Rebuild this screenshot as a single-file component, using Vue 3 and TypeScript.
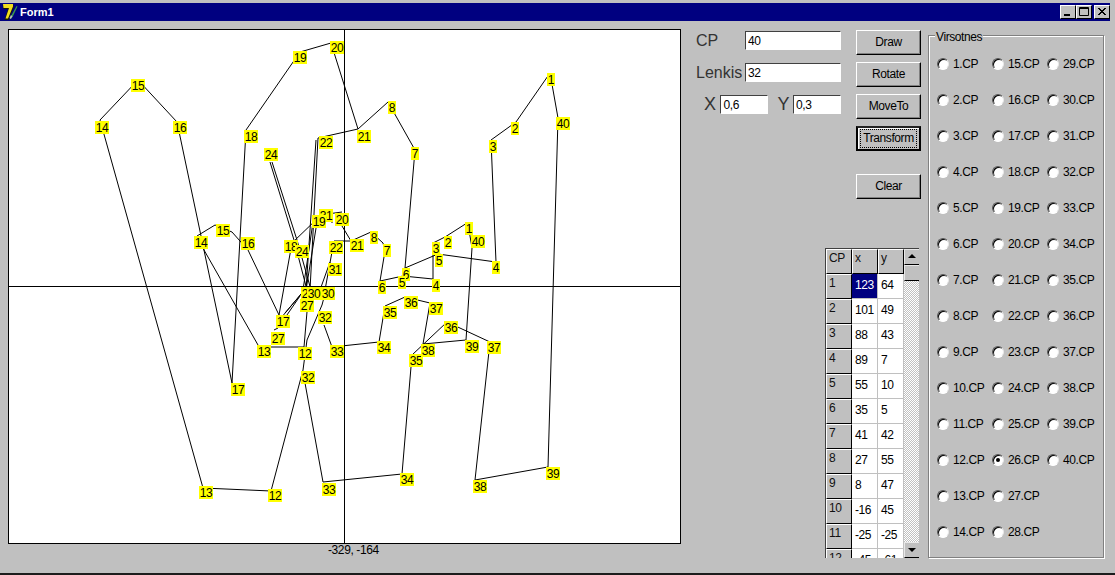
<script setup lang="ts">
type Pt = [number, number];

const canvasLines: Pt[][] = [
  // outer outline
  [[550, 73], [516, 122], [491, 140], [496, 262], [438, 254], [405, 268], [415, 150], [388, 102], [358, 129], [331, 43], [300, 52], [246, 130], [232, 383], [177, 122], [138, 80], [100, 120], [203, 488], [271, 491], [303, 370], [307, 340], [322, 305], [326, 290]],
  [[303, 372], [323, 482], [402, 474], [412, 355], [447, 322], [490, 342], [475, 480], [548, 467], [558, 118], [550, 73]],
  [[358, 129], [318, 138], [310, 290]],
  [[316, 140], [306, 290]],
  [[270, 162], [294, 240], [307, 290]],
  [[272, 162], [297, 240], [311, 290]],
  // inner outline
  [[467, 223], [445, 237], [433, 243], [433, 279], [403, 276], [380, 281], [385, 251], [383, 243], [371, 232], [351, 241], [334, 241], [325, 290]],
  [[351, 241], [342, 226]],
  [[342, 212], [320, 215], [319, 217], [292, 243], [279, 315], [248, 250], [232, 232], [215, 225], [197, 236], [204, 250], [258, 345]],
  [[270, 347], [304, 347], [308, 300], [313, 288]],
  [[274, 330], [278, 328], [300, 296]],
  [[285, 313], [303, 292]],
  [[281, 318], [306, 288]],
  [[324, 325], [332, 347], [379, 342], [385, 306], [405, 297], [430, 303], [423, 344], [466, 340], [472, 248], [468, 224]],
  [[313, 222], [303, 290]],
  [[317, 222], [306, 290]],
  [[330, 262], [320, 290]],
  [[322, 218], [322, 214]],
  [[332, 215], [332, 223]],
];

const labels: [string, number, number][] = [
  ['1', 551, 80], ['2', 515, 129], ['3', 493, 147], ['4', 496, 268], ['5', 439, 261], ['6', 406, 275],
  ['7', 415, 154], ['8', 392, 108], ['21', 364, 137], ['20', 337, 48], ['19', 300, 58], ['18', 251, 137],
  ['17', 238, 390], ['16', 180, 128], ['15', 138, 86], ['14', 102, 128], ['13', 206, 493], ['12', 275, 496],
  ['22', 326, 143], ['24', 271, 155], ['33', 329, 490], ['34', 407, 480], ['35', 416, 361], ['36', 451, 328],
  ['37', 494, 348], ['38', 480, 487], ['39', 553, 474], ['40', 563, 124],
  ['31', 326, 216], ['19', 319, 222], ['20', 342, 220], ['21', 357, 246], ['22', 336, 248], ['8', 374, 238], ['7', 387, 251],
  ['18', 291, 247], ['24', 302, 252], ['31', 335, 270], ['29', 308, 294], ['30', 314, 294], ['30', 328, 294],
  ['27', 307, 306], ['32', 325, 318], ['17', 283, 322], ['27', 278, 339], ['13', 264, 352], ['12', 305, 354], ['32', 308, 378],
  ['33', 337, 352], ['34', 384, 348], ['16', 248, 244], ['15', 223, 231], ['14', 201, 243],
  ['1', 469, 229], ['2', 448, 243], ['3', 436, 249], ['4', 436, 286], ['5', 402, 283], ['6', 382, 288],
  ['35', 390, 313], ['36', 411, 303], ['37', 436, 309], ['38', 428, 351], ['39', 472, 347], ['40', 478, 242],
];

const points = (line: Pt[]) => line.map((p) => p.join(',')).join(' ');
const labelWidth = (text: string) => (text.length > 1 ? 14 : 8);

const rows: [number, number, number][] = [
  [1, 123, 64], [2, 101, 49], [3, 88, 43], [4, 89, 7], [5, 55, 10], [6, 35, 5],
  [7, 41, 42], [8, 27, 55], [9, 8, 47], [10, -16, 45], [11, -25, -25], [12, -45, -61],
];

const radios = Array.from({ length: 40 }, (_, i) => i + 1);
const buttons = ['Draw', 'Rotate', 'MoveTo', 'Transform'];
</script>

<template>
  <div class="window">
    <div class="titlebar">
      <svg class="app-icon" width="18" height="18" viewBox="0 0 18 18">
        <path d="M1.500 1.500h11v3l-5 12.500H3.500L7 6H2.500z" fill="#1a1a00" />
        <path d="M2 1h10v2.500L7 15.500H4.500L8 5H2.500z" fill="#f0dc20" />
        <path d="M9 15l6.500-12 1 .5L12 13l-2 3z" fill="#3f9a4a" />
        <path d="M10 12l1.500 1.500-2 2.500-1-1z" fill="#b8c0b8" />
      </svg>
      <span class="title">Form1</span>
      <div class="win-buttons">
        <div class="win-btn">
          <svg width="14" height="12" viewBox="0 0 14 12"><path d="M3 8h6v2H3z" fill="#000" /></svg>
        </div>
        <div class="win-btn">
          <svg width="14" height="12" viewBox="0 0 14 12"><path d="M2.500 1.500h9v8h-9zM2.500 2.500h9" fill="none" stroke="#000" /></svg>
        </div>
        <div class="win-btn close">
          <svg width="14" height="12" viewBox="0 0 14 12"><path d="M3 2l7 7M4 2l7 7M10 2l-7 7M11 2l-7 7" stroke="#000" /></svg>
        </div>
      </div>
    </div>

    <div class="body">
      <div class="left">
        <div class="canvas">
          <svg width="671" height="513" viewBox="9 30 671 513">
            <line x1="9" y1="286.500" x2="680" y2="286.500" class="axis" />
            <line x1="344.500" y1="30" x2="344.500" y2="543" class="axis" />
            <polyline v-for="(line, i) in canvasLines" :key="i" :points="points(line)" class="shape" />
            <g v-for="(l, i) in labels" :key="'l' + i">
              <rect :x="l[1] - labelWidth(l[0]) / 2" :y="l[2] - 7" :width="labelWidth(l[0])" height="13" fill="#ffff00" />
              <text :x="l[1]" :y="l[2] + 4" text-anchor="middle" class="label">{{ l[0] }}</text>
            </g>
          </svg>
        </div>
        <div class="status">-329, -164</div>
      </div>

      <div class="middle">
        <div class="top">
          <div class="form">
            <div class="form-row">
              <label class="cap wide">CP</label>
              <input class="edit long" value="40" />
            </div>
            <div class="form-row">
              <label class="cap wide">Lenkis</label>
              <input class="edit long" value="32" />
            </div>
            <div class="form-row xy">
              <label class="cap x">X</label>
              <input class="edit short" value="0,6" />
              <label class="cap y">Y</label>
              <input class="edit short" value="0,3" />
            </div>
          </div>
          <div class="buttons">
            <button v-for="b in buttons" :key="b" class="btn" :class="{ focused: b === 'Transform' }">
              <span>{{ b }}</span>
            </button>
            <button class="btn clear"><span>Clear</span></button>
          </div>
        </div>

        <div class="grid-wrap">
          <div class="grid">
            <div class="cell fixed">CP</div>
            <div class="cell fixed">x</div>
            <div class="cell fixed">y</div>
            <template v-for="r in rows" :key="r[0]">
              <div class="cell fixed">{{ r[0] }}</div>
              <div class="cell" :class="{ selected: r[0] === 1 }">{{ r[1] }}</div>
              <div class="cell">{{ r[2] }}</div>
            </template>
          </div>
          <div class="scrollbar">
            <div class="sb-btn"><svg width="14" height="14" viewBox="0 0 14 14"><path d="M7 4l4 4H3z" fill="#000" /></svg></div>
            <div class="sb-btn thumb"></div>
            <div class="sb-track"></div>
            <div class="sb-btn"><svg width="14" height="14" viewBox="0 0 14 14"><path d="M3 5h8l-4 4z" fill="#000" /></svg></div>
          </div>
        </div>
      </div>

      <div class="group">
        <span class="legend">Virsotnes</span>
        <div class="radios">
          <div v-for="n in radios" :key="n" class="radio-item">
            <span class="radio" :class="{ checked: n === 26 }"></span>
            <span>{{ n }}.CP</span>
          </div>
        </div>
      </div>
    </div>
  </div>
</template>

<style scoped>
.window {
  width: 1115px;
  height: 575px;
  box-sizing: border-box;
  padding-top: 3px;
  background: #c0c0c0;
  border-bottom: 2px solid #1c1c1c;
  overflow: hidden;
  font-family: "Liberation Sans", Arial, sans-serif;
  font-size: 12px;
  letter-spacing: -0.4px;
  color: #000;
}

.titlebar {
  display: flex;
  align-items: center;
  height: 18px;
  margin-right: 5px;
  background: #000080;
}

.app-icon {
  margin-left: 1px;
  flex: none;
}

.title {
  margin-left: 1px;
  color: #fff;
  font-size: 11px;
  font-weight: bold;
  letter-spacing: 0;
}

.win-buttons {
  display: flex;
  margin-left: auto;
}

.win-btn {
  display: flex;
  width: 16px;
  height: 14px;
  box-sizing: border-box;
  background: #c0c0c0;
  border: 1px solid;
  border-color: #fff #000 #000 #fff;
}

.win-btn svg {
  display: block;
}

.win-btn.close {
  margin-left: 2px;
}

.body {
  display: flex;
  padding: 8px 0 0 8px;
}

.left {
  width: 673px;
  flex: none;
}

.canvas {
  width: 671px;
  height: 513px;
  border: 1px solid #000;
  background: #fff;
}

.canvas svg {
  display: block;
}

.axis {
  stroke: #000;
  stroke-width: 1;
  shape-rendering: crispEdges;
}

.shape {
  fill: none;
  stroke: #000;
  stroke-width: 1;
}

.label {
  font-family: "Liberation Sans", Arial, sans-serif;
  font-size: 12px;
  letter-spacing: -0.4px;
  fill: #000;
}

.status {
  margin: 0 0 0 320px;
  line-height: 12px;
}

.middle {
  width: 225px;
  margin-left: 15px;
  flex: none;
}

.top {
  display: flex;
}

.form {
  display: flex;
  flex-direction: column;
  gap: 13px;
  width: 145px;
  padding-top: 2px;
}

.form-row {
  display: flex;
  align-items: center;
  height: 19px;
}

.form-row.xy {
  padding-left: 8px;
}

.cap {
  font-size: 16px;
  line-height: 19px;
  letter-spacing: 0;
  color: #333;
}

.cap.wide {
  width: 49px;
  flex: none;
  white-space: nowrap;
}

.cap.x {
  width: 17px;
  font-size: 18px;
}

.cap.y {
  width: 16px;
  margin-left: 9px;
  font-size: 18px;
}

.edit {
  height: 19px;
  box-sizing: border-box;
  margin: 0;
  padding: 1px 2px;
  background: #fff;
  border: 1px solid;
  border-color: #404040 #fff #fff #404040;
  border-radius: 0;
  outline: 0;
  font: 12px "Liberation Sans", Arial, sans-serif;
  letter-spacing: -0.4px;
  color: #000;
}

.edit.long {
  width: 96px;
}

.edit.short {
  width: 48px;
}

.buttons {
  display: flex;
  flex-direction: column;
  gap: 7px;
  margin-left: 15px;
  padding-top: 1px;
}

.btn {
  display: flex;
  align-items: center;
  justify-content: center;
  width: 65px;
  height: 25px;
  box-sizing: border-box;
  margin: 0;
  padding: 0 0 1px;
  background: #c0c0c0;
  border: 1px solid;
  border-color: #fff #000 #000 #fff;
  border-radius: 0;
  box-shadow: inset -1px -1px 0 #808080;
  font: 12px "Liberation Sans", Arial, sans-serif;
  letter-spacing: -0.4px;
  color: #000;
}

.btn.clear {
  margin-top: 16px;
}

.btn.focused {
  padding: 0;
  border: 2px solid #000;
  border-top-color: #222;
  box-shadow: inset 1px 1px 0 #fff;
}

.btn.focused span {
  padding: 2px 0;
  width: 57px;
  border: 1px dotted #000;
  box-sizing: border-box;
  line-height: 13px;
}

.grid-wrap {
  display: flex;
  width: 94px;
  height: 310px;
  box-sizing: border-box;
  margin: 49px 0 0 129px;
  background: #fff;
  overflow: hidden;
  border-top: 1px solid #404040;
  border-left: 1px solid #404040;
}

.grid {
  display: grid;
  grid-template-columns: 26px 26px 26px;
  grid-auto-rows: 25px;
  flex: none;
  height: 309px;
  overflow: hidden;
  align-content: start;
}

.cell {
  box-sizing: border-box;
  padding: 5px 2px 0 3px;
  line-height: 13px;
  background: #fff;
  border-right: 1px solid #c0c0c0;
  border-bottom: 1px solid #c0c0c0;
}

.cell.fixed {
  background: #c0c0c0;
  padding-left: 2px;
  padding-top: 2px;
  color: #111;
  border-top: 1px solid #fff;
  border-left: 1px solid #fff;
  border-right: 1px solid #000;
  border-bottom: 1px solid #000;
}

.cell.selected {
  background: #000080;
  color: #fff;
}

.scrollbar {
  display: flex;
  flex-direction: column;
  width: 16px;
  height: 309px;
  flex: none;
}

.sb-btn {
  width: 16px;
  height: 16px;
  box-sizing: border-box;
  flex: none;
  background: #c0c0c0;
  border: 1px solid;
  border-color: #e8e8e8 #000 #000 #e8e8e8;
}

.sb-btn svg {
  display: block;
}

.sb-track {
  flex: 1;
  background: repeating-conic-gradient(#fff 0 25%, #c0c0c0 0 50%) 0 0 / 2px 2px;
}

.group {
  position: relative;
  width: 176px;
  height: 523px;
  box-sizing: border-box;
  margin: 6px 0 0 7px;
  padding: 10px 0 0 8px;
  border: 1px solid #808080;
  box-shadow: inset 1px 1px 0 #fff, 1px 1px 0 #fff;
}

.legend {
  position: absolute;
  top: -5px;
  left: 6px;
  padding: 0 1px;
  line-height: 13px;
  background: #c0c0c0;
}

.radios {
  display: grid;
  grid-auto-flow: column;
  grid-template-rows: repeat(14, 36px);
  grid-template-columns: repeat(3, 55px);
}

.radio-item {
  display: flex;
  align-items: center;
  gap: 4px;
}

.radio {
  position: relative;
  width: 12px;
  height: 12px;
  box-sizing: border-box;
  flex: none;
  background: #fff;
  border: 1px solid;
  border-color: #555 #e8e8e8 #fff #555;
  border-radius: 50%;
  box-shadow: inset 1px 1px 0 #000;
}

.radio.checked::after {
  content: "";
  position: absolute;
  top: 3px;
  left: 3px;
  width: 4px;
  height: 4px;
  border-radius: 50%;
  background: #000;
}
</style>
